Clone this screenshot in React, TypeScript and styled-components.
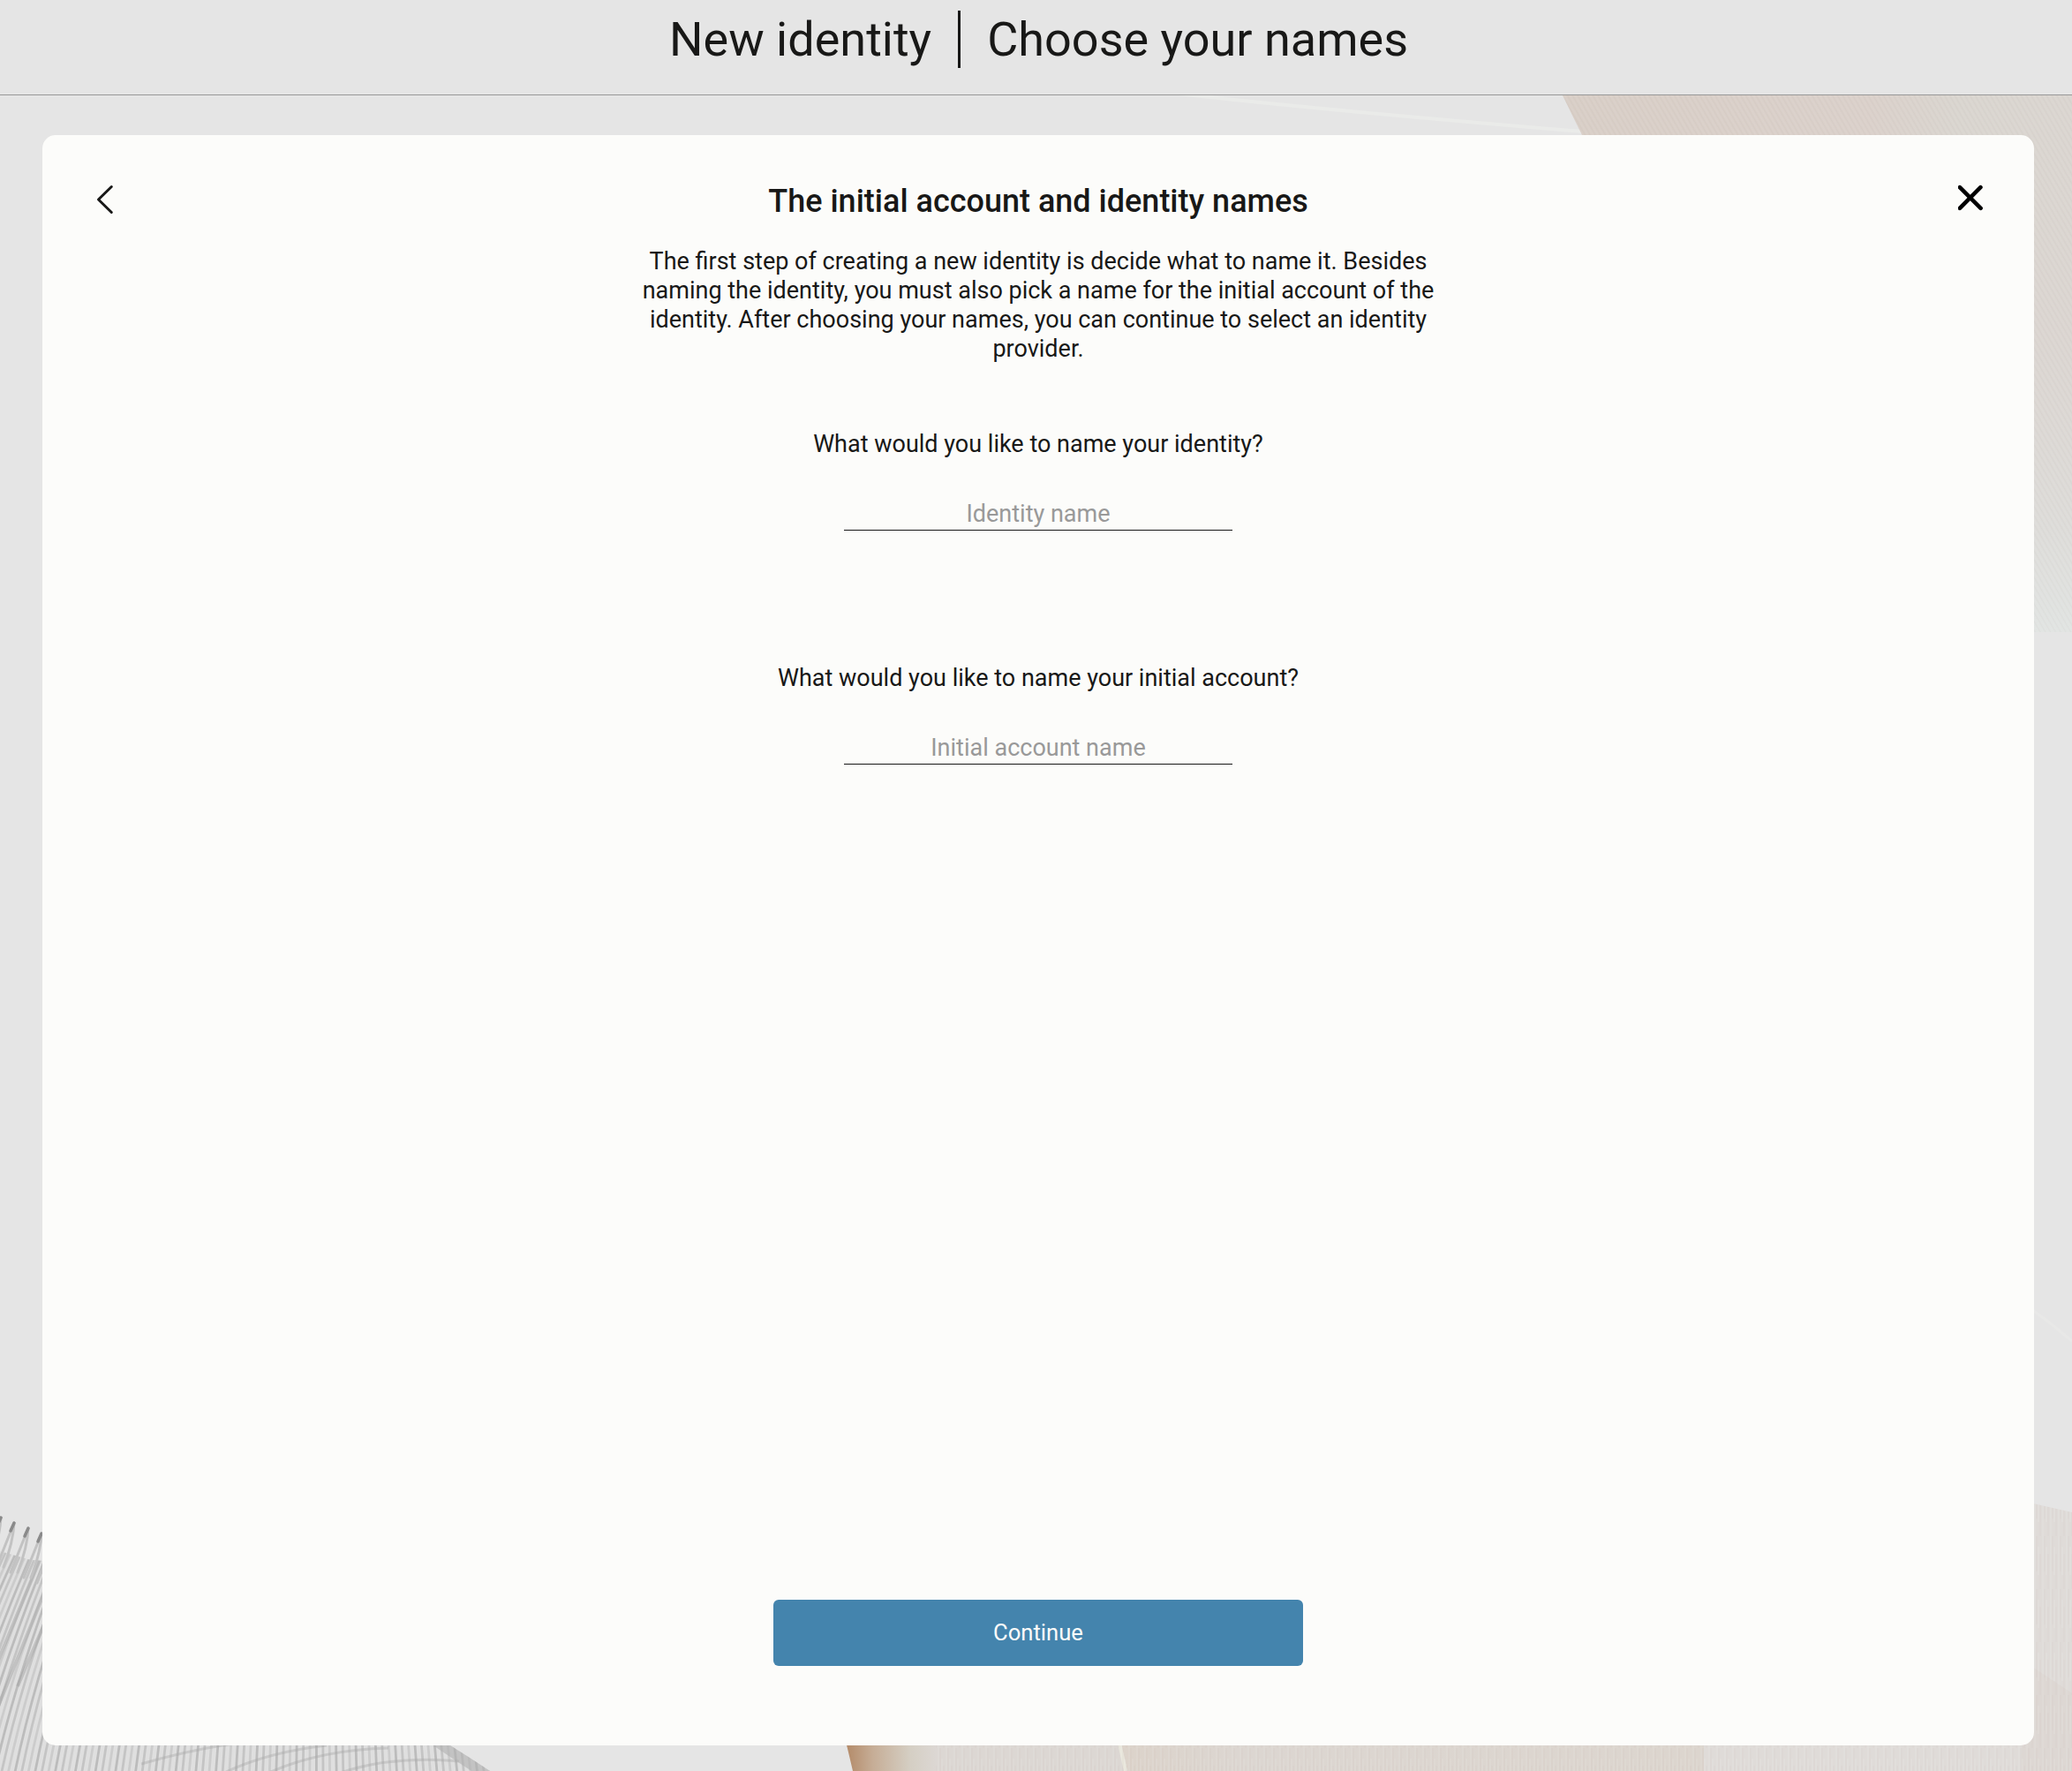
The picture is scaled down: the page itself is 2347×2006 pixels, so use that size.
import React from 'react';
import styled, { createGlobalStyle } from 'styled-components';

const GlobalStyle = createGlobalStyle`
  *, *::before, *::after { box-sizing: border-box; }
  body { margin: 0; font-family: Roboto, 'Liberation Sans', sans-serif; color: #181817; background: #e5e5e5; }
  h1, h2, p { margin: 0; font-weight: 400; }
`;

const Page = styled.div`
  position: relative;
  isolation: isolate;
  display: flex;
  flex-direction: column;
  height: 2006px;
  overflow: hidden;
`;

const Artwork = styled.svg`
  position: absolute;
  inset: 0;
  z-index: -1;
  width: 2347px;
  height: 2006px;
`;

const Header = styled.header`
  display: flex;
  justify-content: center;
  align-items: flex-start;
  flex: none;
  height: 108px;
  padding-top: 12px;
  padding-left: 6px;
  border-bottom: 1px solid #989898;
  background: #e5e5e5;
`;

const HeaderTitle = styled.h1`
  font-size: 54px;
  line-height: 65px;
  white-space: nowrap;

  & + & {
    margin-left: 30px;
    padding-left: 30px;
    border-left: 3px solid #181817;
  }
`;

const Card = styled.main`
  display: grid;
  grid-template-columns: 142px 1fr 142px;
  flex: none;
  width: 2256px;
  height: 1824px;
  margin: 45px 0 0 48px;
  border-radius: 15px;
  background: #fcfcfa;
`;

const IconButton = styled.button`
  display: flex;
  justify-content: center;
  align-self: start;
  height: 100px;
  padding: 55px 0 0;
  border: 0;
  background: none;
`;

const Content = styled.section`
  display: flex;
  flex-direction: column;
  align-items: center;
  padding: 54px 0 90px;
  text-align: center;
`;

const CardTitle = styled.h2`
  font-size: 36px;
  line-height: 43px;
  font-weight: 500;
`;

const Description = styled.p`
  width: 900px;
  margin-top: 30px;
  font-size: 27px;
  line-height: 33px;
`;

const Field = styled.label<{ $gap: number }>`
  display: flex;
  flex-direction: column;
  align-items: center;
  margin-top: ${({ $gap }) => $gap}px;
  font-size: 27px;
  line-height: 33px;
`;

const NameInput = styled.input`
  width: 440px;
  height: 43px;
  margin-top: 38px;
  padding: 6px 0 0;
  border: 0;
  border-bottom: 1px solid #181817;
  background: transparent;
  font: inherit;
  text-align: center;

  &::placeholder { color: #999; opacity: 1; }
`;

const ContinueButton = styled.button`
  width: 600px;
  height: 75px;
  margin-top: auto;
  border: 0;
  border-radius: 6px;
  background: #4484ad;
  color: #fcfcfa;
  font: 400 25.6px/31px Roboto, sans-serif;
`;

const threads = Array.from({ length: 86 }, (_, i) => {
  const x = -90 + i * 7.6;
  const lean = 98 - i * 1.65;
  return { d: `M${x} 2010 Q${x + lean * 0.3} 1900 ${x + lean} 1755`, tone: i % 3 };
});

const tips = [[1, 1719], [16, 1725], [32, 1731], [47, 1737], [62, 1743]];

function Backdrop() {
  return (
    <Artwork viewBox="0 0 2347 2006" aria-hidden="true">
      <defs>
        <linearGradient id="upper" x1="1770" y1="0" x2="2347" y2="0" gradientUnits="userSpaceOnUse">
          <stop offset="0" stopColor="#d8cec6" />
          <stop offset="0.6" stopColor="#dad0ca" />
          <stop offset="0.78" stopColor="#d9d5cf" />
          <stop offset="1" stopColor="#dad5d0" />
        </linearGradient>
        <linearGradient id="upperFade" x1="0" y1="150" x2="0" y2="716" gradientUnits="userSpaceOnUse">
          <stop offset="0" stopColor="#dbd6d1" stopOpacity="0" />
          <stop offset="0.4" stopColor="#dbd5d1" stopOpacity="0.7" />
          <stop offset="0.8" stopColor="#dddcd9" />
          <stop offset="1" stopColor="#e1e4e2" />
        </linearGradient>
        <linearGradient id="roll" x1="958" y1="0" x2="1060" y2="0" gradientUnits="userSpaceOnUse">
          <stop offset="0" stopColor="#b38a68" />
          <stop offset="0.3" stopColor="#c6ad96" />
          <stop offset="0.72" stopColor="#d5cfc4" />
          <stop offset="1" stopColor="#dcd7d3" />
        </linearGradient>
        <linearGradient id="lower" x1="1270" y1="0" x2="1930" y2="0" gradientUnits="userSpaceOnUse">
          <stop offset="0" stopColor="#dcd3ca" />
          <stop offset="0.2" stopColor="#dcd6d1" />
          <stop offset="1" stopColor="#dcd5ce" />
        </linearGradient>
        <pattern id="weave" width="5" height="9" patternUnits="userSpaceOnUse" patternTransform="rotate(-30)">
          <path d="M1 0V9" stroke="#fff" strokeOpacity="0.09" />
          <path d="M3.5 0V9" stroke="#988c84" strokeOpacity="0.05" />
        </pattern>
        <pattern id="grain" width="9" height="60" patternUnits="userSpaceOnUse">
          <path d="M1 0V60M5 12V44" stroke="#fff" strokeOpacity="0.14" />
          <path d="M3 0V40M7 20V60" stroke="#8c7d75" strokeOpacity="0.05" />
        </pattern>
        <clipPath id="arch">
          <path d="M0 1757 L35 1767 L50 1768 Q330 1800 510 1977 Q534 1992 555 2006 H0Z" />
        </clipPath>
      </defs>
      <path d="M1335 106 Q1470 122 1792 149" fill="none" stroke="#eaebe9" strokeWidth="4" />
      <path d="M1769 106 L1793 155 L2300 716 H2347 V106Z" fill="url(#upper)" />
      <path d="M2290 150 H2347 V716 H2290Z" fill="url(#upperFade)" />
      <path d="M1769 106 L1793 155 L2300 716 H2347 V106Z" fill="url(#weave)" />
      <path d="M2300 1482 Q2325 1500 2347 1519" fill="none" stroke="#e8e8e7" strokeWidth="3" />
      <path d="M2290 1700 L2347 1713 V2006 H1930 V1977Z" fill="#dfdbd8" />
      <path d="M2290 1880 L2347 1918 V2006 H2290Z" fill="#ddd7d3" />
      <path d="M950 1940 Q960 1980 966 2006 H1277 L1262 1940Z" fill="url(#roll)" />
      <path d="M1262 1940 L1277 2006 H1930 V1940Z" fill="url(#lower)" />
      <path d="M1261 1940 Q1270 1985 1275 2006" fill="none" stroke="#e8e6dc" strokeWidth="4" />
      <path d="M1060 1970 H2347 V2006 H1060Z M2290 1700 L2347 1713 V2006 H2290Z" fill="url(#grain)" />
      <g clipPath="url(#arch)">
        <path d="M0 1750 H570 V2006 H0Z" fill="#dfdfdf" />
        {threads.map(({ d, tone }) => (
          <path key={d} d={d} fill="none" stroke={['#c4c4c4', '#cccccc', '#bcbcbc'][tone]} strokeWidth="2.8" />
        ))}
        <path
          d="M50 1755 L-10 1900 M70 1755 L-5 1940 M80 1770 L20 1910"
          stroke="#a0a0a0"
          strokeOpacity="0.45"
          strokeWidth="4"
        />
        <path
          d="M160 1998 Q240 1975 310 1970 M250 2010 Q300 1985 370 1977 M300 2010 Q360 1982 440 1980 M380 2010 Q440 1988 520 1995"
          fill="none"
          stroke="#a8a8a8"
          strokeOpacity="0.4"
          strokeWidth="3"
        />
        <path d="M485 1965 Q530 1995 553 2010" fill="none" stroke="#b0b0b0" strokeWidth="14" strokeOpacity="0.6" />
      </g>
      {tips.map(([x, y]) => (
        <g key={x} fill="none" strokeLinecap="round">
          <path
            d={`M${x} ${y} L${x - 20} ${y + 50} M${x} ${y} Q${x - 1} ${y + 22} ${x - 12} ${y + 50}`}
            stroke="#c2c2c2"
            strokeWidth="3"
          />
          <path d={`M${x} ${y} L${x - 4} ${y + 9}`} stroke="#8a8a8a" strokeWidth="3.5" />
        </g>
      ))}
    </Artwork>
  );
}

export default function App() {
  return (
    <>
      <GlobalStyle />
      <Page>
        <Backdrop />
        <Header>
          <HeaderTitle>New identity</HeaderTitle>
          <HeaderTitle>Choose your names</HeaderTitle>
        </Header>
        <Card>
          <IconButton aria-label="Back">
            <svg width="22" height="36" viewBox="0 0 22 36" fill="none" stroke="#181817" strokeWidth="3" strokeLinecap="round" strokeLinejoin="round">
              <path d="M18.3 3.5 L3.5 18 L18.3 32.5" />
            </svg>
          </IconButton>
          <Content>
            <CardTitle>The initial account and identity names</CardTitle>
            <Description>
              The first step of creating a new identity is decide what to name it. Besides naming the identity, you must
              also pick a name for the initial account of the identity. After choosing your names, you can continue to
              select an identity provider.
            </Description>
            <Field $gap={75}>
              What would you like to name your identity?
              <NameInput placeholder="Identity name" />
            </Field>
            <Field $gap={151}>
              What would you like to name your initial account?
              <NameInput placeholder="Initial account name" />
            </Field>
            <ContinueButton>Continue</ContinueButton>
          </Content>
          <IconButton aria-label="Close">
            <svg width="30" height="32" viewBox="0 0 30 32" fill="none" stroke="#000" strokeWidth="4.6" strokeLinecap="round">
              <path d="M1.9 4.2 L25.6 27.8 M25.4 4.2 L1.9 27.8" />
            </svg>
          </IconButton>
        </Card>
      </Page>
    </>
  );
}
